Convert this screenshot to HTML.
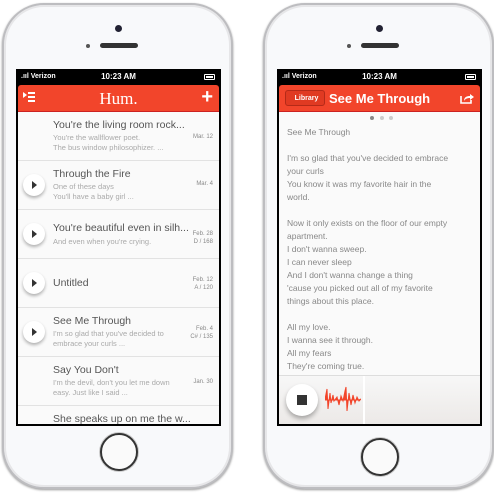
<!DOCTYPE html>
<html><head><style>
*{margin:0;padding:0;box-sizing:border-box}
body{width:494px;height:493px;background:#fff;position:relative;overflow:hidden;font-family:"Liberation Sans",sans-serif}
.phone{position:absolute;top:3px;width:231px;height:486px;border-radius:42px;background:#f8f9fb;border:2px solid #bdbdc0;box-shadow:inset 0 0 0 2px #e6e6e8,0 1px 2px #999}
.cam{position:absolute;width:7px;height:7px;border-radius:50%;background:#223;top:20px}
.spk{position:absolute;width:38px;height:5px;border-radius:3px;background:#333;top:38px}
.dot{position:absolute;width:4px;height:4px;border-radius:50%;background:#555;top:39px}
.home{position:absolute;width:38px;height:38px;border-radius:50%;border:2px solid #333;background:#fafafa;box-shadow:0 0 0 1px #ccc}
.screen{position:absolute;top:69px;width:205px;height:357px;background:#000;overflow:hidden}
.sb{height:16px;color:#fff;font-size:8px;font-weight:bold;position:relative}
.sb .l{position:absolute;left:5px;top:4px;font-size:7px}
.sb .c{position:absolute;left:0;right:0;text-align:center;top:3px}
.sb .b{position:absolute;right:6px;top:5px;width:11px;height:6px;border:1px solid #fff;border-radius:1px}
.sb .b:after{content:"";position:absolute;left:1px;top:1px;width:7px;height:2px;background:#fff}
.hdr{position:absolute;top:16px;left:2px;right:2px;height:27px;background:#f2452b;border-bottom:1px solid #c22;border-radius:3px 3px 0 0;color:#fff}
.body{position:absolute;top:43px;left:2px;right:2px;bottom:2px;background:#fafafa;overflow:hidden}
.item{height:49px;border-bottom:1px solid #e2e2e2;position:relative}
.t{position:absolute;left:35px;top:7px;font-size:10.5px;color:#555;white-space:nowrap}
.s{position:absolute;left:35px;font-size:7.5px;color:#aaa;white-space:nowrap}
.d{position:absolute;right:6px;font-size:6px;color:#888;text-align:right;line-height:8px}
.pb{position:absolute;left:5px;top:13px;width:22px;height:22px;border-radius:50%;background:#fff;box-shadow:0 2px 3px rgba(0,0,0,.3)}
.pb:after{content:"";position:absolute;left:9px;top:7px;border-left:5px solid #333;border-top:4px solid transparent;border-bottom:4px solid transparent}
.lyr{position:absolute;left:8px;top:14px;font-size:8.5px;color:#888;line-height:13px}
</style></head><body>

<div class="phone" style="left:2px">
 <div class="cam" style="left:111px"></div><div class="dot" style="left:82px"></div><div class="spk" style="left:96px"></div>
 <div class="home" style="left:96px;top:428px"></div>
</div>
<div class="phone" style="left:263px">
 <div class="cam" style="left:111px"></div><div class="dot" style="left:82px"></div><div class="spk" style="left:96px"></div>
 <div class="home" style="left:96px;top:433px"></div>
</div>

<div class="screen" style="left:16px">
 <div class="sb"><span class="l">.ııl Verizon</span><span class="c">10:23 AM</span><span class="b"></span></div>
 <div class="hdr">
  <div style="position:absolute;left:5px;top:7px;width:13px">
   <div style="position:absolute;left:0;top:0;border-left:4px solid #fff;border-top:3px solid transparent;border-bottom:3px solid transparent"></div>
   <div style="position:absolute;left:5px;top:0;width:7px;height:2px;background:#fff"></div>
   <div style="position:absolute;left:5px;top:4px;width:7px;height:2px;background:#fff"></div>
   <div style="position:absolute;left:5px;top:8px;width:7px;height:2px;background:#fff"></div>
  </div>
  <div style="position:absolute;left:0;right:0;top:4px;text-align:center;font-size:17px;font-family:'Liberation Serif',serif">Hum.</div>
  <div style="position:absolute;right:6px;top:1px;font-size:20px;font-weight:bold">+</div>
 </div>
 <div class="body">
  <div class="item"><div class="t">You're the living room rock...</div><div class="s" style="top:21px">You're the wallflower poet.</div><div class="s" style="top:31px">The bus window philosophizer. ...</div><div class="d" style="top:21px">Mar. 12</div></div>
  <div class="item"><div class="pb"></div><div class="t">Through the Fire</div><div class="s" style="top:21px">One of these days</div><div class="s" style="top:31px">You'll have a baby girl ...</div><div class="d" style="top:19px">Mar. 4</div></div>
  <div class="item"><div class="pb"></div><div class="t" style="top:12px">You're beautiful even in silh...</div><div class="s" style="top:27px">And even when you're crying.</div><div class="d" style="top:20px">Feb. 28<br>D / 168</div></div>
  <div class="item"><div class="pb"></div><div class="t" style="top:18px">Untitled</div><div class="d" style="top:17px">Feb. 12<br>A / 120</div></div>
  <div class="item"><div class="pb"></div><div class="t">See Me Through</div><div class="s" style="top:21px">I'm so glad that you've decided to</div><div class="s" style="top:31px">embrace your curls ...</div><div class="d" style="top:17px">Feb. 4<br>C# / 135</div></div>
  <div class="item"><div class="t">Say You Don't</div><div class="s" style="top:21px">I'm the devil, don't you let me down</div><div class="s" style="top:31px">easy. Just like I said ...</div><div class="d" style="top:21px">Jan. 30</div></div>
  <div class="item"><div class="t">She speaks up on me the w...</div></div>
 </div>
</div>

<div class="screen" style="left:277px">
 <div class="sb"><span class="l">.ııl Verizon</span><span class="c">10:23 AM</span><span class="b"></span></div>
 <div class="hdr">
  <div style="position:absolute;left:6px;top:5px;width:40px;height:16px;background:#e03a22;border:1px solid #b52a18;border-radius:3px;font-size:7px;font-weight:bold;display:flex;align-items:center;justify-content:center;padding-left:3px">Library</div>
  <div style="position:absolute;left:50px;top:6px;font-size:13px;font-weight:bold">See Me Through</div>
  <svg style="position:absolute;right:6px;top:7px" width="14" height="12" viewBox="0 0 14 12"><path d="M1 4v7h10V8" fill="none" stroke="#fff" stroke-width="1.6"/><path d="M4 9c0-4 3-5 6-5V2l4 3-4 3V6c-3 0-5 1-6 3z" fill="#fff"/></svg>
 </div>
 <div class="body">
  <div style="position:absolute;left:91px;top:4px;width:4px;height:4px;border-radius:50%;background:#888"></div>
  <div style="position:absolute;left:101px;top:4px;width:4px;height:4px;border-radius:50%;background:#ccc"></div>
  <div style="position:absolute;left:110px;top:4px;width:4px;height:4px;border-radius:50%;background:#ccc"></div>
  <div class="lyr">See Me Through<br><br>I'm so glad that you've decided to embrace<br>your curls<br>You know it was my favorite hair in the<br>world.<br><br>Now it only exists on the floor of our empty<br>apartment.<br>I don't wanna sweep.<br>I can never sleep<br>And I don't wanna change a thing<br>'cause you picked out all of my favorite<br>things about this place.<br><br>All my love.<br>I wanna see it through.<br>All my fears<br>They're coming true.</div>
  <div style="position:absolute;left:0;right:0;top:263px;height:50px;background:linear-gradient(#f7f7f7,#ece9e7);border-top:1px solid #ddd">
   <div style="position:absolute;left:84px;top:0;bottom:0;width:2px;background:#fff"></div>
   <div style="position:absolute;left:7px;top:8px;width:32px;height:32px;border-radius:50%;background:#fff;box-shadow:0 3px 5px rgba(0,0,0,.3)"><div style="position:absolute;left:11px;top:11px;width:10px;height:10px;background:#333"></div></div>
   <svg style="position:absolute;left:46px;top:9px" width="36" height="28" viewBox="0 0 36 28"><path d="M0 14L2 4 3 24 5 8 6 18 8 10 9 16 12 12 14 20 16 11 18 16 20 6 21 2 22 26 24 8 26 20 28 10 30 18 32 12 34 16 36 14 34 15 0 15z" fill="#f2452b" stroke="#f2452b" stroke-width="1"/></svg>
  </div>
 </div>
</div>
</body></html>
